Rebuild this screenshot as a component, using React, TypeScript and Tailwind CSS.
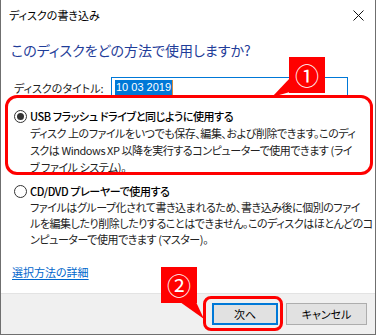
export default function App() {
  return (
    <div className="relative h-[336px] w-[378px] bg-white font-['Noto_Sans_CJK_JP','Noto_Sans',sans-serif] text-[11px] text-black [font-feature-settings:'palt']">
      <div className="flex h-[335px] w-[376px] flex-col border-x border-b border-[#6f6f6f]">
        <div className="flex h-[30px] items-center justify-between pl-[8px] pr-[9px]">
          <span className="leading-[16px]">ディスクの書き込み</span>
          <svg width="11" height="11" viewBox="0 0 11 11" className="mr-[2px]">
            <path d="M0.5 0.5 L10.5 10.5 M10.5 0.5 L0.5 10.5" stroke="#111" strokeWidth="1" />
          </svg>
        </div>

        <div className="flex-1 px-[10px]">
          <h1 className="mt-[8px] text-[14px] leading-[24px] text-[#1f3d99]">
            このディスクをどの方法で使用しますか?
          </h1>

          <div className="mt-[15px] flex items-center">
            <label className="ml-[3px] w-[97px] whitespace-nowrap leading-[16px] text-[#222]">ディスクのタイトル:</label>
            <div className="flex h-[21px] w-[237px] items-center border border-[#0078d7] pl-[3px]">
              <span className="bg-[#0078d7] px-[1px] font-['Liberation_Sans',sans-serif] text-[11px] leading-[15px] text-white">
                10 03 2019
              </span>
              <span className="h-[15px] w-[1px] bg-[#d88a3c]" />
            </div>
          </div>

          <div className="mt-[10px] flex items-start gap-[3px] pl-[3px]">
            <span className="mt-[2px] flex h-[13px] w-[13px] shrink-0 items-center justify-center rounded-full border border-[#333]">
              <span className="h-[7px] w-[7px] rounded-full bg-[#333]" />
            </span>
            <div className="leading-[17px]">
              <p className="font-medium tracking-[-0.4px] text-black">USB フラッシュ ドライブと同じように使用する</p>
              <p className="whitespace-nowrap tracking-[-0.45px] text-[#222]">
                ディスク 上のファイルをいつでも保存、編集、および削除できます。このディ
                <br />
                スクは Windows XP 以降を実行するコンピューターで使用できます (ライ
                <br />
                ブ ファイル システム)。
              </p>
            </div>
          </div>

          <div className="mt-[7px] flex items-start gap-[3px] pl-[3px]">
            <span className="mt-[2px] h-[13px] w-[13px] shrink-0 rounded-full border border-[#333]" />
            <div className="leading-[16px]">
              <p className="font-medium tracking-[-0.4px] text-black">CD/DVD プレーヤーで使用する</p>
              <p className="whitespace-nowrap tracking-[-0.45px] text-[#222]">
                ファイルはグループ化されて書き込まれるため、書き込み後に個別のファイ
                <br />
                ルを編集したり削除したりすることはできません。このディスクはほとんどのコ
                <br />
                ンピューターで使用できます (マスター)。
              </p>
            </div>
          </div>

          <a className="mt-[17px] ml-[1px] inline-block leading-[16px] text-[#0066cc] underline underline-offset-2">
            選択方法の詳細
          </a>
        </div>

        <div className="flex h-[41px] items-center justify-end gap-[8px] border-t border-[#e3e3e3] bg-[#f0f0f0] pr-[8px]">
          <button className="h-[22px] w-[66px] border-2 border-[#0078d7] bg-[#e1e1e1] text-[11px] leading-[16px] text-black">
            次へ
          </button>
          <button className="h-[22px] w-[81px] border border-[#adadad] bg-[#e1e1e1] text-[11px] leading-[16px] text-black">
            キャンセル
          </button>
        </div>
      </div>

      {/* annotations */}
      <div className="absolute left-[5px] top-[95px] h-[80px] w-[368px] rounded-[12px] border-[3px] border-[#ff0000]" />
      <svg className="absolute left-0 top-0" width="378" height="336">
        <polygon points="290,78 290,92 272,97" fill="#ff0000" />
        <polygon points="180,302 196,302 204,319" fill="#ff0000" />
      </svg>
      <div className="absolute left-[289px] top-[57px] flex h-[36px] w-[36px] items-center justify-center bg-[#ff0000] text-[24px] leading-none text-white">
        ①
      </div>
      <div className="absolute left-[203px] top-[296px] h-[35px] w-[80px] rounded-[8px] border-[3px] border-[#ff0000]" />
      <div className="absolute left-[161px] top-[267px] flex h-[36px] w-[36px] items-center justify-center bg-[#ff0000] text-[24px] leading-none text-white">
        ②
      </div>
    </div>
  );
}
